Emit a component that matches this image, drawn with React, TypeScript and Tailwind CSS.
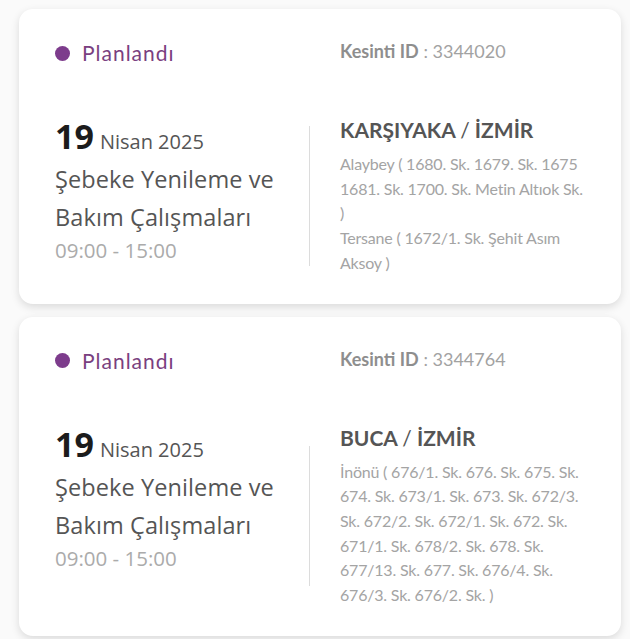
import React from "react";

type Outage = {
  id: string;
  day: string;
  month: string;
  title: string;
  time: string;
  district: string;
  city: string;
  areas: string[];
};

const outages: Outage[] = [
  {
    id: "3344020",
    day: "19",
    month: "Nisan 2025",
    title: "Şebeke Yenileme ve Bakım Çalışmaları",
    time: "09:00 - 15:00",
    district: "KARŞIYAKA",
    city: "İZMİR",
    areas: [
      "Alaybey ( 1680. Sk. 1679. Sk. 1675 1681. Sk. 1700. Sk. Metin Altıok Sk. )",
      "Tersane ( 1672/1. Sk. Şehit Asım Aksoy )",
    ],
  },
  {
    id: "3344764",
    day: "19",
    month: "Nisan 2025",
    title: "Şebeke Yenileme ve Bakım Çalışmaları",
    time: "09:00 - 15:00",
    district: "BUCA",
    city: "İZMİR",
    areas: [
      "İnönü ( 676/1. Sk. 676. Sk. 675. Sk. 674. Sk. 673/1. Sk. 673. Sk. 672/3. Sk. 672/2. Sk. 672/1. Sk. 672. Sk. 671/1. Sk. 678/2. Sk. 678. Sk. 677/13. Sk. 677. Sk. 676/4. Sk. 676/3. Sk. 676/2. Sk. )",
    ],
  },
];

const leftFont = "font-['Open_Sans','Noto_Sans',sans-serif]";
const rightFont = "font-['Lato','Noto_Sans',sans-serif]";

function OutageCard({ item }: { item: Outage }) {
  return (
    <article className="rounded-[14px] bg-white pl-[36px] pr-[30px] pt-[27px] pb-[28px] shadow-[0_3px_8px_rgba(0,0,0,0.13)]">
      <div className="flex h-[34px] items-center">
        <div className="flex w-[285px] items-center gap-[12px]">
          <span className="h-[15px] w-[15px] rounded-full bg-[#7d3c8c]" />
          <span className={`${rightFont} text-[21px] tracking-[1px] text-[#7a3f80]`}>Planlandı</span>
        </div>
        <p className={`${rightFont} -mt-[3px] text-[18px] text-[#a2a2a2]`}>
          <span className="font-bold text-[#8e8e8e]">Kesinti ID</span> : {item.id}
        </p>
      </div>

      <div className="mt-[47px] flex">
        <div className={`${leftFont} w-[254px] shrink-0`}>
          <p className="flex items-baseline gap-[6px] leading-[38px]">
            <span className="text-[34px] font-bold text-[#1c1c1c]">{item.day}</span>
            <span className="text-[20px] text-[#555]">{item.month}</span>
          </p>
          <p className="-mt-[1px] text-[23.5px] leading-[38px] tracking-[0.1px] text-[#555]">{item.title}</p>
          <p className="text-[20.5px] leading-[28px] text-[#ababab]">{item.time}</p>
        </div>

        <div className="h-[140px] w-px shrink-0 self-center bg-[#dcdcdc]" />

        <div className={`${rightFont} ml-[30px] w-[246px]`}>
          <p className="-mt-[1px] text-[21px] font-bold leading-[28px] text-[#555]">
            {item.district} <span className="font-normal">/</span> {item.city}
          </p>
          <div className="mt-[8px] text-[16px] leading-[24.7px] tracking-[-0.2px] text-[#a4a4a4]">
            {item.areas.map((area) => (
              <p key={area}>{area}</p>
            ))}
          </div>
        </div>
      </div>
    </article>
  );
}

export default function App() {
  return (
    <div className="min-h-screen bg-[#fafafa] px-[19px] pt-[9px] pb-[6px]">
      <div className="flex w-[602px] flex-col gap-[13px]">
        {outages.map((item) => (
          <OutageCard key={item.id} item={item} />
        ))}
      </div>
    </div>
  );
}
